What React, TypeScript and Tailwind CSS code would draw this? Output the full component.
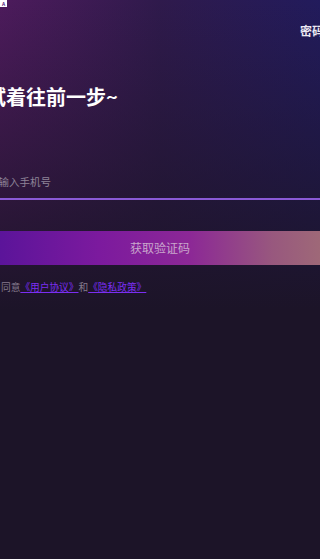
import { useState } from 'react'

const font = { fontFamily: '"Noto Sans CJK SC", "Noto Sans", sans-serif' }

const App = () => {
  const [phone, setPhone] = useState('')
  const [agreed, setAgreed] = useState(false)

  return (
    <div
      className="relative min-h-screen w-full overflow-hidden bg-[#1c1428] bg-[linear-gradient(to_bottom,rgba(28,20,40,0)_0px,rgba(28,20,40,0.55)_170px,#1c1428_310px),linear-gradient(to_right,#4d1b5c_0%,#2f1a4c_50%,#221b5c_100%)] bg-no-repeat"
      style={font}
    >
      {/* stray status icon in the corner */}
      <div className="absolute left-0 top-0 flex h-[7px] w-[7px] items-center justify-center bg-white">
        <span className="text-[5px] leading-none font-bold text-[#5a2a80]">A</span>
      </div>

      <div className="ml-[-28px] w-[392px] px-4">
        <div className="flex justify-end pt-[24px]">
          <span className="text-[12px] leading-[14px] font-bold text-[#ece8f2]">密码登录</span>
        </div>

        <h1 className="mt-[47px] ml-[-2px] text-[20px] leading-[24px] font-bold text-white">试着往前一步~</h1>

        <div className="mt-[62px] border-b-2 border-[#8a5ad6] pb-[5px]">
          <input
            value={phone}
            onChange={(e) => setPhone(e.target.value)}
            placeholder="请输入手机号"
            className="block h-[22px] w-full bg-transparent text-[10.5px] leading-[22px] text-white outline-none placeholder:text-[#8e8498]"
            style={font}
          />
        </div>

        <button
          className="mt-[31px] ml-[-16px] flex h-[34px] w-[376px] items-center justify-center bg-[linear-gradient(to_right,#52129a_0%,#5c149a_8%,#7c1a9e_34%,#8c2896_58%,#98587e_80%,#a27274_100%)] text-[12px] text-[#c9a6cc]"
          style={font}
        >
          获取验证码
        </button>

        <div className="mt-[16px] flex items-center text-[9.7px] leading-[12px] text-[#857b8e]">
          <span
            onClick={() => setAgreed(!agreed)}
            className={'mr-[2px] h-[11px] w-[11px] rounded-full border border-[#857b8e] ' + (agreed ? 'bg-[#7a2ef0]' : '')}
          />
          <span>同意</span>
          <a className="text-[#7b2ef2] underline">《用户协议》</a>
          <span>和</span>
          <a className="text-[#7b2ef2] underline">《隐私政策》</a>
        </div>
      </div>
    </div>
  )
}

export default App
